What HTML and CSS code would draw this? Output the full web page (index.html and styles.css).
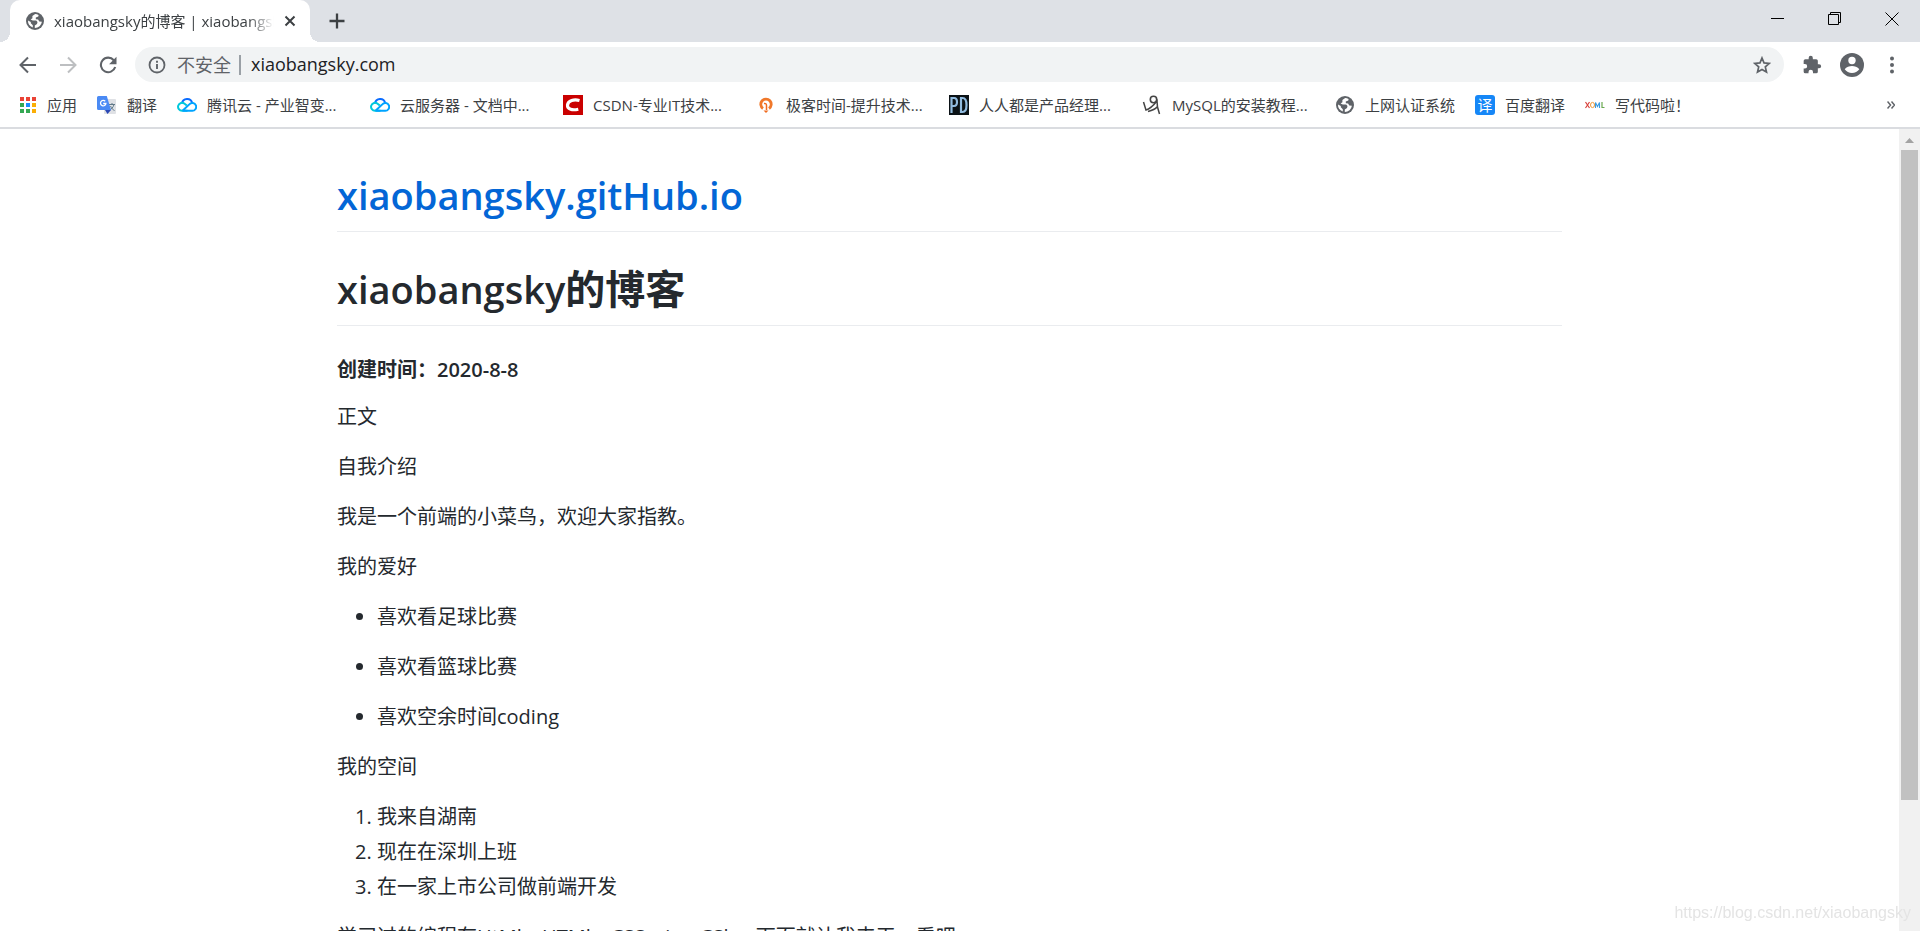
FILE: index.html
```html
<!DOCTYPE html>
<html lang="zh-CN">

<head>
    <meta charset="UTF-8">
    <title>xiaobangsky的博客 | xiaobangsky.gitHub.io</title>
    <link rel="stylesheet" href="styles.css">
</head>

<body>
    <svg class="defs" aria-hidden="true">
        <symbol id="globe" viewBox="0 0 18 18">
            <circle cx="9" cy="9" r="9" fill="#5f6368" />
            <path d="M9.200 2.100 6.400 4v2.200L4.600 7.600l2.200.9h3.400l1.300 1.600-.5 2-2.200 1.300v2.500A7 7 0 0 0 15.900 9.800l-2.600-.4-1.200-1.900-2.300-.2V5.500l2.500-.9.3-1.600A7 7 0 0 0 9.200 2.100zM2 8.600a7 7 0 0 0 4.800 6.900v-2.300L4.800 11.300V9.900z" fill="#fff" />
        </symbol>
        <symbol id="cloud" viewBox="0 0 20 16">
            <path d="M5 6.500A5.200 5.200 0 0 1 15.200 6" fill="none" stroke="#0a6cff" stroke-width="2" />
            <path d="M10.500 13.800H5.200A4 4 0 1 1 7.600 6.700l2.200 1.900" fill="none" stroke="#00c8dc" stroke-width="2" />
            <path d="M5.500 13.800 12.300 7.400a3.900 3.900 0 1 1 2.600 6.400H5.500" fill="none" stroke="#00a4ff" stroke-width="2" />
        </symbol>
    </svg>

    <div class="tabstrip">
        <div class="tab">
            <svg class="tab-icon" width="18" height="18"><use href="#globe" /></svg>
            <span class="tab-title">xiaobangsky的博客 | xiaobangsky</span>
            <button class="tab-close" aria-label="关闭标签页">
                <svg width="12" height="12" viewBox="0 0 12 12"><path d="M1.500 1.500l9 9M10.500 1.500l-9 9" stroke="#3c4043" stroke-width="2" /></svg>
            </button>
        </div>
        <button class="new-tab" aria-label="打开新的标签页">
            <svg width="16" height="16" viewBox="0 0 16 16"><path d="M8 0.500v15M0.500 8h15" stroke="#3c4043" stroke-width="2.300" /></svg>
        </button>
        <div class="window-buttons">
            <button aria-label="最小化">
                <svg width="14" height="14" viewBox="0 0 14 14"><path d="M0 6.500h13" stroke="#000" /></svg>
            </button>
            <button aria-label="还原">
                <svg width="14" height="14" viewBox="0 0 14 14"><path d="M.5 2.500h10v10H.5zM2.500 2.500v-2h10v10h-2" fill="none" stroke="#000" /></svg>
            </button>
            <button aria-label="关闭">
                <svg width="14" height="14" viewBox="0 0 14 14"><path d="M.5.500l13 13M13.500.500l-13 13" stroke="#000" /></svg>
            </button>
        </div>
    </div>

    <div class="toolbar">
        <button aria-label="后退">
            <svg width="18" height="18" viewBox="0 0 18 18"><path d="M17 9H2.500M9 1.500 1.500 9 9 16.500" fill="none" stroke="#5f6368" stroke-width="2" /></svg>
        </button>
        <button aria-label="前进">
            <svg width="18" height="18" viewBox="0 0 18 18"><path d="M1 9h14.500M9 1.500 16.500 9 9 16.500" fill="none" stroke="#bdbfc1" stroke-width="2" /></svg>
        </button>
        <button aria-label="重新加载">
            <svg width="18" height="18" viewBox="0 0 18 18"><path d="M14.800 4.200A7.300 7.300 0 1 0 16.200 11" fill="none" stroke="#5f6368" stroke-width="2.100" /><path d="M17.500.8v7.400h-7.400z" fill="#5f6368" /></svg>
        </button>
        <div class="omnibox">
            <button class="site-info">
                <svg width="18" height="18" viewBox="0 0 18 18"><circle cx="9" cy="9" r="7.500" fill="none" stroke="#5f6368" stroke-width="1.800" /><path d="M9 8v5M9 4.700v2" stroke="#5f6368" stroke-width="1.900" /></svg>
                <span>不安全</span>
            </button>
            <input class="url" type="text" value="xiaobangsky.com" aria-label="地址和搜索栏">
            <button class="star" aria-label="为此标签页添加书签">
                <svg width="18" height="18" viewBox="0 0 18 18"><path d="M9 2 11 6.900l5.300.5-4 3.500 1.200 5.200L9 13.400l-4.500 2.700 1.200-5.200-4-3.500L7 6.900z" fill="none" stroke="#5f6368" stroke-width="1.700" /></svg>
            </button>
        </div>
        <button class="ext" aria-label="扩展程序">
            <svg width="20" height="20" viewBox="0 0 24 24"><path d="M20.500 11H19V7a2 2 0 0 0-2-2h-4V3.500a2.500 2.500 0 0 0-5 0V5H4a2 2 0 0 0-2 2v3.800h1.500a2.700 2.700 0 0 1 0 5.400H2V20a2 2 0 0 0 2 2h3.800v-1.500a2.700 2.700 0 0 1 5.400 0V22H17a2 2 0 0 0 2-2v-4h1.500a2.500 2.500 0 0 0 0-5z" fill="#5f6368" /></svg>
        </button>
        <button class="user" aria-label="用户">
            <svg width="24" height="24" viewBox="0 0 24 24"><circle cx="12" cy="12" r="12" fill="#5f6368" /><circle cx="12" cy="7.500" r="3.700" fill="#fff" /><path d="M4.700 16.200c1.600-2.300 4.800-3.200 7.300-3.200s5.700.9 7.300 3.200a8.800 8.800 0 0 1-14.600 0z" fill="#fff" /></svg>
        </button>
        <button class="menu" aria-label="菜单">
            <svg width="4" height="18" viewBox="0 0 4 18"><circle cx="2" cy="2.500" r="2" fill="#5f6368" /><circle cx="2" cy="9" r="2" fill="#5f6368" /><circle cx="2" cy="15.500" r="2" fill="#5f6368" /></svg>
        </button>
    </div>

    <div class="bookmarks">
        <a class="apps" href="#">
            <svg width="20" height="20" viewBox="0 0 20 20">
                <path d="M2 2h4v4H2zM8 2h4v4H8zM14 2h4v4h-4z" fill="#ea4335" />
                <path d="M2 8h4v4H2zM2 14h4v4H2zM8 14h4v4H8z" fill="#34a853" />
                <path d="M8 8h4v4H8z" fill="#1a8cff" />
                <path d="M14 8h4v4h-4zM14 14h4v4h-4z" fill="#fbae05" />
            </svg>
            <span>应用</span>
        </a>
        <a href="#">
            <svg width="20" height="20" viewBox="0 0 20 20">
                <rect x="7" y="4" width="12" height="15" rx="1" fill="#dfe1e5" />
                <path d="M12 9.500h6M15 8v1.500M17 9.500c-.8 3-2.500 4.500-4.500 5.500M13.500 11c1 2 2 3.500 4 4.500" fill="none" stroke="#607988" />
                <path d="M8 15h6l-3.500 4z" fill="#2a48b5" />
                <path d="M1.500 1h8.300L14 15H1.500A1.500 1.500 0 0 1 0 13.500v-11A1.500 1.500 0 0 1 1.500 1z" fill="#4a8af4" />
                <path d="M8.200 6.300A2.700 2.700 0 1 0 8.900 8.500H6.200" fill="none" stroke="#fff" stroke-width="1.300" />
            </svg>
            <span>翻译</span>
        </a>
        <a href="#">
            <svg width="20" height="16"><use href="#cloud" /></svg>
            <span class="long">腾讯云 - 产业智变...</span>
        </a>
        <a href="#">
            <svg width="20" height="16"><use href="#cloud" /></svg>
            <span class="long">云服务器 - 文档中...</span>
        </a>
        <a href="#">
            <svg width="20" height="20" viewBox="0 0 20 20"><path d="M0 0h20v20H0z" fill="#ca0000" /><path d="M16.500 5.500C11 4 5 5.500 4.500 10c-.4 4.500 5 5.500 10.800 4.200" fill="none" stroke="#fff" stroke-width="3.200" /></svg>
            <span class="long">CSDN-专业IT技术...</span>
        </a>
        <a href="#">
            <svg width="20" height="20" viewBox="0 0 20 20"><path d="M7 13.500A5.200 5.200 0 1 1 13 13.500" fill="none" stroke="#f0782a" stroke-width="2.800" /><path d="M8 8.500q2.500-.5 2.500 2V15" fill="none" stroke="#f06a1d" stroke-width="1.500" /><path d="M7.500 15.500h5L10 18z" fill="#f06a1d" /></svg>
            <span class="long">极客时间-提升技术...</span>
        </a>
        <a href="#">
            <svg width="20" height="20" viewBox="0 0 20 20"><path d="M0 0h20v20H0z" fill="#0b1216" /><path d="M2.500 18V3H5q3 0 3 4t-3 4H3M12 3v14h1.500q4 0 4-7t-4-7z" fill="none" stroke="#92bce0" stroke-width="2.200" /></svg>
            <span class="long">人人都是产品经理...</span>
        </a>
        <a href="#">
            <svg width="20" height="20" viewBox="0 0 20 20"><circle cx="11.500" cy="4.500" r="3.200" fill="none" stroke="#444" stroke-width="1.600" /><path d="M1.500 7c1 3 1.500 5 2.500 8 4-1 7-4 11-9l.5 6 2 7M6 16.500c4-1 7-2 9-4.500" fill="none" stroke="#444" stroke-width="1.500" /></svg>
            <span class="long">MySQL的安装教程...</span>
        </a>
        <a href="#">
            <svg width="20" height="18"><use href="#globe" /></svg>
            <span>上网认证系统</span>
        </a>
        <a href="#">
            <span class="fanyi-icon">译</span>
            <span>百度翻译</span>
        </a>
        <a href="#">
            <svg width="20" height="20" viewBox="0 0 20 20"><path d="M.5 7l4 6M4.500 7l-4 6" stroke="#d8423c" stroke-width="1.200" /><ellipse cx="7.500" cy="10" rx="2" ry="2.600" fill="none" stroke="#f29a38" /><path d="M10.500 13V7.500l2 4 2-4V13" fill="none" stroke="#3c9be0" stroke-width="1.100" /><path d="M17 7v5.500h2.500" fill="none" stroke="#6aa84f" stroke-width="1.200" /></svg>
            <span>写代码啦！</span>
        </a>
        <button class="more" aria-label="更多书签">
            <svg width="8" height="8" viewBox="0 0 8 8"><path d="M.5.500 3.500 4l-3 3.500M4.500.500l3 3.500-3 3.500" fill="none" stroke="#5f6368" stroke-width="1.500" /></svg>
        </button>
    </div>

    <div class="viewport">
        <div class="page">
            <div class="markdown-body">
                <h1><a class="latin" href="#">xiaobangsky.gitHub.io</a></h1>
                <h1><span class="latin">xiaobangsky</span>的博客</h1>
                <h4>创建时间：2020-8-8</h4>
                <p>正文</p>
                <p>自我介绍</p>
                <p>我是一个前端的小菜鸟，欢迎大家指教。</p>
                <p>我的爱好</p>
                <ul>
                    <li><p>喜欢看足球比赛</p></li>
                    <li><p>喜欢看篮球比赛</p></li>
                    <li><p>喜欢空余时间coding</p></li>
                </ul>
                <p>我的空间</p>
                <ol>
                    <li>我来自湖南</li>
                    <li>现在在深圳上班</li>
                    <li>在一家上市公司做前端开发</li>
                </ol>
                <p>学习过的编程有HtMl，HTMl，CSS，js，CSh，下面就让我来干一看吧</p>
            </div>
        </div>
        <div class="scrollbar">
            <svg width="21" height="21" viewBox="0 0 21 21"><path d="M6 14l4.500-5 4.500 5z" fill="#a3a3a3" /></svg>
            <div class="thumb"></div>
        </div>
    </div>
    <div class="watermark">https://blog.csdn.net/xiaobangsky</div>
</body>

</html>
```
FILE: styles.css
```css
*{
    box-sizing: border-box;
}
body{
    height: 100vh;
    margin: 0;
    display: flex;
    flex-direction: column;
    overflow: hidden;
    background: white;
    color: #24292e;
    font-family: 'Open Sans', 'Noto Sans CJK SC', sans-serif;
}
button{
    display: flex;
    align-items: center;
    justify-content: center;
    padding: 0;
    border: 0;
    background: none;
    font-family: inherit;
    cursor: pointer;
}
svg{
    display: block;
    flex: none;
}
.defs{
    position: absolute;
    width: 0;
    height: 0;
}

/* 标签栏 */
.tabstrip{
    display: flex;
    flex: none;
    height: 42px;
    padding-left: 10px;
    background: #dee1e6;
}
.tab{
    position: relative;
    display: flex;
    align-items: center;
    width: 300px;
    padding: 0 14px 0 16px;
    border-radius: 10px 10px 0 0;
    background: white;
}
.tab::before, .tab::after{
    content: "";
    position: absolute;
    bottom: 0;
    width: 10px;
    height: 10px;
}
.tab::before{
    right: 100%;
    background: radial-gradient(circle at 0 0, #dee1e6 10px, white 10px);
}
.tab::after{
    left: 100%;
    background: radial-gradient(circle at 100% 0, #dee1e6 10px, white 10px);
}
.tab-title{
    flex: 1;
    margin-left: 10px;
    padding-bottom: 2px;
    overflow: hidden;
    white-space: nowrap;
    color: #3c4043;
    font-size: 15px;
    -webkit-mask-image: linear-gradient(to right, black 88%, transparent);
    mask-image: linear-gradient(to right, black 88%, transparent);
}
.tab-close{
    width: 12px;
    height: 20px;
    margin-left: 10px;
}
.new-tab{
    width: 36px;
    margin-left: 9px;
}
.window-buttons{
    display: flex;
    margin-left: auto;
}
.window-buttons button{
    width: 57px;
    height: 37px;
}

/* 工具栏 */
.toolbar{
    display: flex;
    align-items: center;
    flex: none;
    height: 45px;
    padding: 0 20px 0 8px;
}
.toolbar > button{
    width: 40px;
    height: 35px;
}
.omnibox{
    display: flex;
    align-items: center;
    flex: 1;
    height: 35px;
    margin: 0 8px 0 7px;
    padding: 0 13px;
    border-radius: 18px;
    background: #f1f3f4;
}
.site-info{
    gap: 11px;
    padding-right: 8px;
    border-right: 2px solid #9aa0a6;
    color: #5f6368;
    font-size: 18px;
    line-height: 20px;
}
.url{
    flex: 1;
    padding: 0 0 2px 10px;
    border: 0;
    outline: 0;
    background: none;
    color: #202124;
    font-family: inherit;
    font-size: 18px;
}
.toolbar > .menu{
    width: 16px;
    margin-left: 12px;
}

/* 书签栏 */
.bookmarks{
    display: flex;
    align-items: center;
    flex: none;
    gap: 20px;
    height: 42px;
    padding: 0 25px 4px 18px;
    border-bottom: 2px solid #dadce0;
    white-space: nowrap;
    font-size: 15px;
    line-height: 20px;
}
.bookmarks a{
    display: flex;
    align-items: center;
    gap: 10px;
    color: #3c4043;
    text-decoration: none;
}
.bookmarks .apps{
    gap: 9px;
}
.long{
    width: 143px;
}
.fanyi-icon{
    width: 20px;
    height: 20px;
    border-radius: 3px;
    background: #1687f7;
    color: white;
    text-align: center;
}
.more{
    margin-left: auto;
}

/* 页面 */
.viewport{
    display: flex;
    flex: 1;
    min-height: 0;
}
.page{
    flex: 1;
    overflow: hidden;
}
.markdown-body{
    max-width: 1305px;
    margin: 0 auto;
    padding: 39px 40px;
    font-size: 20px;
    line-height: 30px;
}
h1, h4{
    margin: 30px 0 20px;
    font-weight: 600;
}
h1{
    padding-bottom: 9px;
    border-bottom: 1px solid #eaecef;
    font-size: 40px;
    font-weight: 700;
    line-height: 54px;
}
h1:first-child{
    margin-top: 0;
}
h1 a{
    color: #0366d6;
    text-decoration: none;
}
.latin{
    font-size: 38px;
    font-weight: 600;
}
h4{
    margin-top: 31px;
    font-size: 20px;
    line-height: 25px;
}
p, ul, ol{
    margin: 0 0 20px;
}
ul, ol{
    padding-left: 40px;
}
ol li + li{
    margin-top: 5px;
}
.scrollbar{
    width: 21px;
    background: #f1f1f1;
}
.thumb{
    height: 81%;
    margin: 0 2px;
    background: #c1c1c1;
}
.watermark{
    position: fixed;
    right: 9px;
    bottom: 8px;
    color: #e4e4e4;
    font-family: 'Liberation Sans', sans-serif;
    font-size: 16px;
    line-height: 20px;
}
```
